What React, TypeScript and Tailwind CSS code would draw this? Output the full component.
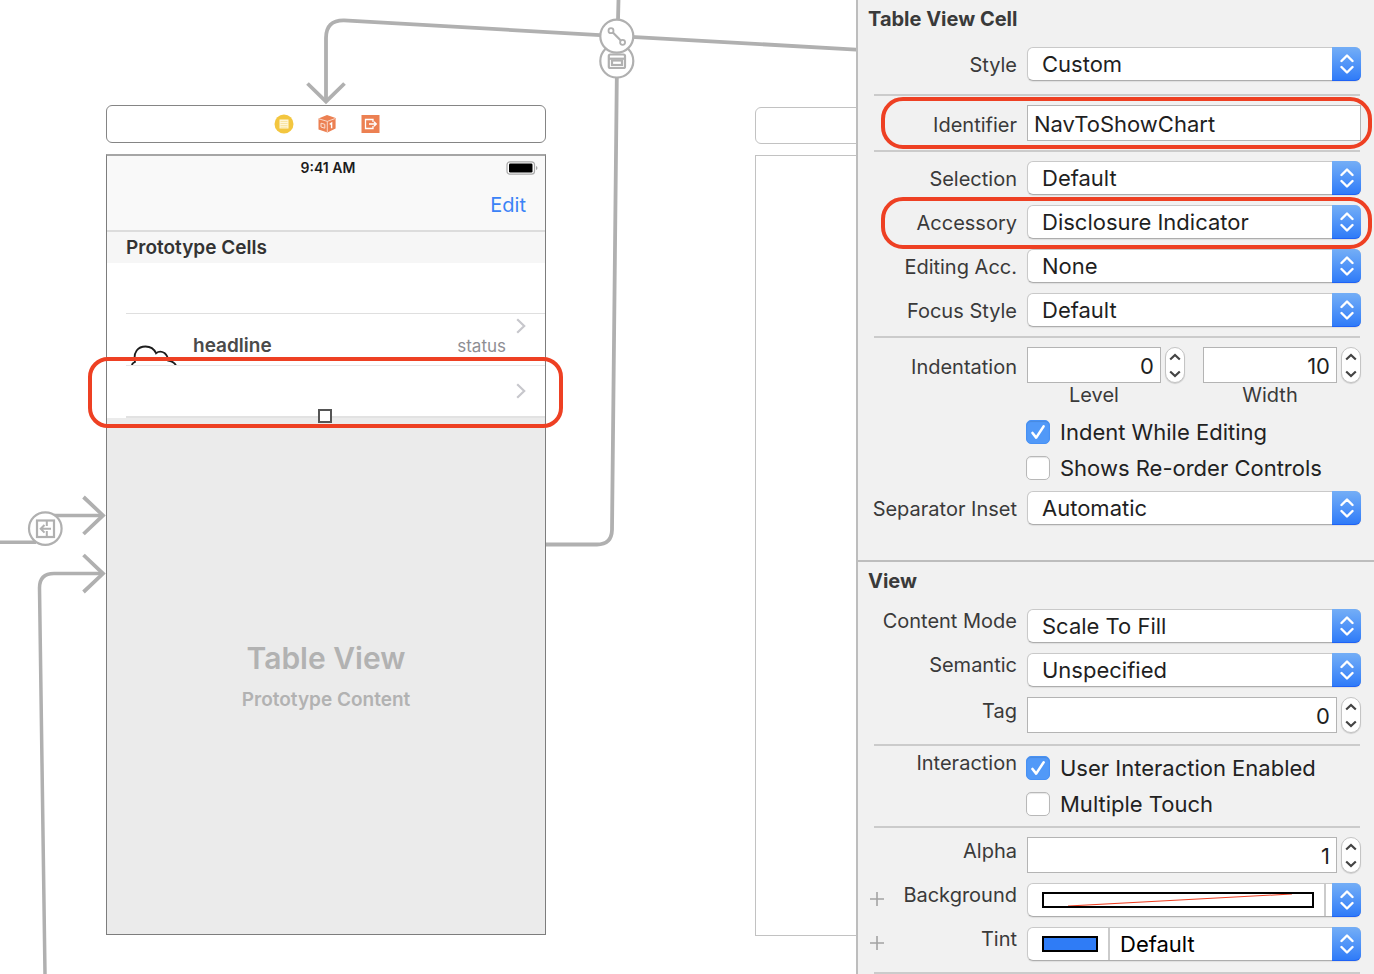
import React, { useId } from "react";

function Updown() {
  return (
    <span className="pointer-events-none absolute inset-y-0 right-0 grid w-[29px] place-items-center rounded-r-[6px] border-b border-[#1f62f5] bg-linear-to-b from-[#74aef6] to-[#2f7bf8]">
      <svg width="14" height="20" viewBox="0 0 14 20" fill="none" stroke="white" strokeWidth="2.4" strokeLinecap="round" strokeLinejoin="round" aria-hidden="true">
        <path d="M1.5 7 7 1.5 12.500 7M1.5 13 7 18.500 12.500 13" />
      </svg>
    </span>
  );
}

const popup =
  "relative flex h-[34px] w-full rounded-[6px] border border-[#c9c9c9] border-b-[#adadad] bg-white shadow-[0_1px_1px_rgba(0,0,0,0.08)]";

function Popup({ id, value }: { id: string; value: string }) {
  return (
    <div className={popup}>
      <select id={id} defaultValue={value} className="w-full appearance-none bg-transparent pr-8 pl-3.5 text-[22px] leading-8 text-[#1f1f1f] outline-none">
        <option>{value}</option>
      </select>
      <div className="absolute -inset-px left-auto w-[29px]">
        <Updown />
      </div>
    </div>
  );
}

const labelAlign = {
  center: "",
  field: "pt-1",
  raised: "pb-3",
  raisedField: "pb-2",
  top: "pb-5",
};

function Row({
  label,
  htmlFor,
  align = "center",
  plus,
  marked,
  children,
}: {
  label: string;
  htmlFor?: string;
  align?: keyof typeof labelAlign;
  plus?: boolean;
  marked?: boolean;
  children: React.ReactNode;
}) {
  return (
    <div className="relative flex items-start gap-2.5 pr-[13px]">
      <div className={`flex h-9 w-[159px] shrink-0 items-center pl-3 ${labelAlign[align]}`}>
        {plus && (
          <button type="button" aria-label={`Add ${label} variation`} className="pt-2 text-[#a3a3a3]">
            <svg width="14" height="14" viewBox="0 0 14 14" stroke="currentColor" strokeWidth="1.6" aria-hidden="true">
              <path d="M7 0V14M0 7H14" />
            </svg>
          </button>
        )}
        <label htmlFor={htmlFor} className="ml-auto text-[20px] leading-6 whitespace-nowrap text-[#3a3a3a]">
          {label}
        </label>
      </div>
      <div className="min-w-0 flex-1">{children}</div>
      {marked && <span className="pointer-events-none absolute -inset-y-2 right-0.5 left-[23px] rounded-[22px] border-4 border-[#ee4023]" />}
    </div>
  );
}

function PopupRow(props: { label: string; value: string; align?: keyof typeof labelAlign; marked?: boolean }) {
  const id = useId();
  return (
    <div className="h-[34px]">
      <Row label={props.label} htmlFor={id} align={props.align} marked={props.marked}>
        <Popup id={id} value={props.value} />
      </Row>
    </div>
  );
}

const field =
  "h-9 w-full min-w-0 border border-[#b4b4b4] bg-white px-1.5 pt-0.5 text-[22px] leading-8 text-[#1f1f1f] outline-none";

function Stepper({ name }: { name: string }) {
  return (
    <div className="flex h-9 w-5 shrink-0 flex-col overflow-hidden rounded-full border border-[#c4c4c4] bg-white shadow-[0_1px_1px_rgba(0,0,0,0.15)]">
      <button type="button" aria-label={`Increase ${name}`} className="grid flex-1 place-items-center">
        <svg width="12" height="8" viewBox="0 0 12 8" fill="none" stroke="#444" strokeWidth="2.2" aria-hidden="true">
          <path d="M1.200 6.500 6 2l4.800 4.500" />
        </svg>
      </button>
      <button type="button" aria-label={`Decrease ${name}`} className="grid flex-1 place-items-center">
        <svg width="12" height="8" viewBox="0 0 12 8" fill="none" stroke="#444" strokeWidth="2.2" aria-hidden="true">
          <path d="M1.200 1.500 6 6l4.800-4.500" />
        </svg>
      </button>
    </div>
  );
}

function NumberField({ id, name, value }: { id: string; name: string; value: string }) {
  return (
    <div className="flex gap-1">
      <input id={id} type="text" inputMode="numeric" aria-label={name} defaultValue={value} className={`${field} text-right`} />
      <Stepper name={name} />
    </div>
  );
}

function Check({ label, checked }: { label: string; checked?: boolean }) {
  return (
    <label className="-ml-px flex h-6 items-center gap-2.5 text-[22px] leading-6 whitespace-nowrap text-[#222]">
      <span className="grid size-6 shrink-0">
        <input
          type="checkbox"
          defaultChecked={checked}
          className="peer col-start-1 row-start-1 size-6 appearance-none rounded-[5px] border border-[#b8b8b8] bg-white shadow-[inset_0_1px_1px_rgba(0,0,0,0.1)] checked:border-[#4791f5] checked:bg-[#5199f8]"
        />
        <svg className="pointer-events-none invisible col-start-1 row-start-1 peer-checked:visible" width="24" height="24" viewBox="0 0 24 24" fill="none" stroke="white" strokeWidth="2.600" strokeLinecap="round" strokeLinejoin="round" aria-hidden="true">
          <path d="M6.500 13 10.200 17.600 17.600 6.400" />
        </svg>
      </span>
      {label}
    </label>
  );
}

function Rule() {
  return <hr className="my-[9px] mr-3.5 ml-4 border-t-2 border-[#cbcbcb]" />;
}

function Inspector() {
  return (
    <aside className="flex flex-col border-l-2 border-[#bdbdbd] bg-[#f1f1f1]">
      <section className="flex flex-col pb-[35px]">
        <h2 className="px-2.5 pt-[7px] pb-4 text-[20px] leading-6 font-bold text-[#3a3a3a]">Table View Cell</h2>
        <div className="pb-1">
          <PopupRow label="Style" value="Custom" />
        </div>
        <Rule />
        <Row label="Identifier" htmlFor="identifier" align="field" marked>
          <input id="identifier" type="text" defaultValue="NavToShowChart" className={`${field} block`} />
        </Row>
        <Rule />
        <div className="flex flex-col gap-2.5">
          <PopupRow label="Selection" value="Default" />
          <PopupRow label="Accessory" value="Disclosure Indicator" marked />
          <PopupRow label="Editing Acc." value="None" />
          <PopupRow label="Focus Style" value="Default" />
        </div>
        <Rule />
        <Row label="Indentation" htmlFor="level" align="field">
          <div className="grid grid-cols-2 gap-x-[18px] text-center text-[20px] leading-6 text-[#3a3a3a]">
            <NumberField id="level" name="Level" value="0" />
            <NumberField id="width" name="Width" value="10" />
            <label htmlFor="level" className="pr-6">Level</label>
            <label htmlFor="width" className="pr-6">Width</label>
          </div>
          <div className="flex flex-col gap-3 pt-[13px] pb-[11px]">
            <Check label="Indent While Editing" checked />
            <Check label="Shows Re-order Controls" />
          </div>
        </Row>
        <PopupRow label="Separator Inset" value="Automatic" />
      </section>

      <section className="flex flex-col border-t-2 border-[#bdbdbd]">
        <h2 className="px-2.5 pt-[7px] pb-4 text-[20px] leading-6 font-bold text-[#3a3a3a]">View</h2>
        <div className="flex flex-col gap-2.5">
          <PopupRow label="Content Mode" value="Scale To Fill" align="raised" />
          <PopupRow label="Semantic" value="Unspecified" align="raised" />
          <Row label="Tag" htmlFor="tag" align="raisedField">
            <NumberField id="tag" name="Tag" value="0" />
          </Row>
        </div>
        <div className="pt-0.5">
          <Rule />
        </div>
        <Row label="Interaction" align="top">
          <div className="flex flex-col gap-3 pt-px">
            <Check label="User Interaction Enabled" checked />
            <Check label="Multiple Touch" />
          </div>
        </Row>
        <div className="pt-px">
          <Rule />
        </div>
        <div className="flex flex-col gap-2.5">
          <Row label="Alpha" htmlFor="alpha" align="raisedField">
            <NumberField id="alpha" name="Alpha" value="1" />
          </Row>
          <div className="h-[34px]">
            <Row label="Background" htmlFor="background" align="raised" plus>
              <div className={popup}>
                <button type="button" aria-label="Background colour" className="flex flex-1 items-center border-r-2 border-[#cbcbcb] pr-2.5 pl-3.5">
                  <span className="block h-4 w-full border-2 border-black bg-white">
                    <svg className="block size-full" viewBox="0 0 268 12" preserveAspectRatio="none" aria-hidden="true">
                      <path d="M24 12 248 0" stroke="#ee4023" strokeWidth="1.100" />
                    </svg>
                  </span>
                </button>
                <select id="background" className="w-[34px] appearance-none bg-transparent outline-none" />
                <div className="absolute -inset-px left-auto w-[29px]">
                  <Updown />
                </div>
              </div>
            </Row>
          </div>
          <div className="h-[34px]">
            <Row label="Tint" htmlFor="tint" align="raised" plus>
              <div className={popup}>
                <button type="button" aria-label="Tint colour" className="flex w-[82px] shrink-0 items-center border-r-2 border-[#cbcbcb] pr-2.5 pl-3.5">
                  <span className="block h-4 w-full border-2 border-black bg-[#2f7cf6]" />
                </button>
                <select id="tint" className="min-w-0 flex-1 appearance-none bg-transparent pr-8 pl-2.5 text-[22px] leading-8 text-black outline-none">
                  <option>Default</option>
                </select>
                <div className="absolute -inset-px left-auto w-[29px]">
                  <Updown />
                </div>
              </div>
            </Row>
          </div>
        </div>
        <div className="pt-0.5">
          <hr className="mt-[9px] mr-3.5 ml-4 border-t-2 border-[#cbcbcb]" />
        </div>
      </section>
    </aside>
  );
}

function Segues() {
  return (
    <svg className="absolute top-0 left-0" width="1400" height="974" viewBox="0 0 1400 974" fill="none" stroke="#b0b0b0" strokeWidth="3.800" aria-hidden="true">
      <path d="M326 101V38Q326 20 344 20.300L600 35.200L900 52" />
      <path d="M307.500 83.500 326 101.500 344.500 83.500" />
      <path d="M618.500 0 617 60 612 530Q611.500 544.500 597 544.500H546" />
      <path d="M0 542.200H36" strokeWidth="3.500" />
      <path d="M54 515.400H103" strokeWidth="3.500" />
      <path d="M83.500 497 103 515.400 83.500 534" />
      <path d="M45 974 39.500 588Q39.500 573.600 54 573.600H103" strokeWidth="3.500" />
      <path d="M83.500 555 103 573.600 83.500 592" />

      <g strokeWidth="2.200">
        <circle cx="616.800" cy="61" r="16.500" fill="white" />
        <rect x="608.800" y="54.500" width="16.200" height="13.500" rx="1.500" />
        <path d="M609 58.700H625" />
        <rect x="612" y="60.500" width="10" height="4.500" />
        <circle cx="616.800" cy="36.200" r="16.500" fill="white" />
        <path d="M612.600 32.300 621 40.700" />
        <circle cx="611" cy="30.700" r="2.500" strokeWidth="1.800" />
        <circle cx="622.600" cy="42.300" r="2.500" strokeWidth="1.800" />
        <circle cx="45.300" cy="528.600" r="16.300" fill="white" />
        <rect x="37" y="520.500" width="17" height="16.500" />
        <path d="M46.800 520V526M46.800 531V537M51 528.800H41M44.500 525 40.700 528.800 44.500 532.600" strokeWidth="2" />
      </g>
    </svg>
  );
}

function Chevron() {
  return (
    <svg width="10" height="16" viewBox="0 0 10 16" fill="none" stroke="#c7c7cc" strokeWidth="2.200" aria-hidden="true">
      <path d="M1.200 1.200 8.200 8 1.200 14.800" />
    </svg>
  );
}

function SceneDock() {
  return (
    <div className="flex h-[38px] items-center justify-center gap-[23px] rounded-[6px] border border-[#858585] bg-white pl-0.5">
      <svg width="20" height="20" viewBox="0 0 20 20" aria-hidden="true">
        <circle cx="10" cy="10" r="9.500" fill="#f3c63f" />
        <rect x="5.500" y="5.500" width="9" height="9" fill="#fff6d8" />
        <path d="M6.500 7.500H13.500M6.500 9.500H13.500M6.500 11.500H13.500M6.500 13.200H13.500" stroke="#f5dc8c" strokeWidth="0.700" />
      </svg>
      <svg width="20" height="20" viewBox="0 0 20 20" aria-hidden="true">
        <path d="M10 1 18.600 4V14.500L10.500 18.500 1.500 15.500V4.500Z" fill="#ec8052" />
        <path d="M1.800 4.800 10.300 7.400 18 4.600M10.300 7.400V18" stroke="#fbe0d3" strokeWidth="0.900" fill="none" />
        <path d="M4 9.200 7.800 10.300V14.200L4 13Z" stroke="#fbe0d3" strokeWidth="1" fill="none" />
        <path d="M12.700 10.300 14.600 9V14.200" stroke="#fff" strokeWidth="1.400" fill="none" />
      </svg>
      <svg width="20" height="20" viewBox="0 0 20 20" aria-hidden="true">
        <rect x="1.500" y="1" width="18" height="18" fill="#ec8052" />
        <path d="M13 8V5.500H5.500V14.500H13V12M9 10H16M14 7.800 16.300 10 14 12.200" stroke="#fff" strokeWidth="1.300" fill="none" />
      </svg>
    </div>
  );
}

function TableScene() {
  return (
    <div className="absolute top-[105px] left-[106px] flex w-[440px] flex-col gap-[11px]">
      <SceneDock />
      <div className="flex h-[781px] flex-col border border-t-2 border-[#7d7d7d] border-t-[#a6a6a6] bg-[#ebebeb]">
        <header className="flex h-[76px] flex-col gap-[15px] border-b-2 border-[#dcdcdc] bg-[#f9f9f9]">
          <div className="grid grid-cols-3 items-center pt-0.5">
            <time className="col-start-2 pl-1 text-center text-[14px] leading-5 font-semibold text-[#1c1c1c]">9:41 AM</time>
            <svg className="mr-[7px] justify-self-end" width="32" height="14" viewBox="0 0 32 14" aria-hidden="true">
              <rect x="1" y="0.800" width="27.500" height="12.400" rx="3" fill="white" stroke="#a8a8a8" strokeWidth="1.200" />
              <rect x="3" y="2.600" width="23.500" height="8.800" rx="1.200" />
              <path d="M30 5V9Q31.500 8.500 31.500 7T30 5" fill="#a8a8a8" />
            </svg>
          </div>
          <button type="button" className="self-end px-[19px] text-[20px] leading-6 text-[#3b83f7]">Edit</button>
        </header>
        <h3 className="h-[31px] bg-[#f6f6f6] pl-[19px] text-[19px] leading-8 font-semibold text-[#333]">Prototype Cells</h3>
        <ul className="relative bg-white">
          <li className="ml-[19px] h-[51px] border-b border-[#dfdfdf]" />
          <li className="ml-[19px] flex h-[52px] border-b border-[#e6e6e6]">
            <svg className="mt-[31px] ml-[5px]" width="47" height="20" viewBox="0 0 47 20" fill="none" stroke="#1d1d1d" strokeWidth="1.800" aria-hidden="true">
              <path d="M1 20.500Q1 18 4 17C2 7 7 1.500 14.500 1.500Q22 1.500 25 8.200Q29 5 33.500 8Q37 11 37 15.500Q43 16.500 45 20.500" />
            </svg>
            <span className="pt-5 pl-[15px] text-[19px] leading-6 font-semibold text-[#4a4a4a]">headline</span>
            <span className="ml-auto pt-5 pr-2.5 text-[17px] leading-6 text-[#8e8e93]">status</span>
            <span className="pt-1 pr-[19px]">
              <Chevron />
            </span>
          </li>
          <li className="ml-[19px] flex h-[52px] items-center justify-end border-b-2 border-[#e2e2e2] pr-[19px]">
            <Chevron />
          </li>
          <li aria-hidden="true" className="absolute -bottom-[5px] left-[211px] size-3.5 border-2 border-[#555] bg-white" />
        </ul>
        <div className="flex flex-1 flex-col items-center gap-2 pt-[220px] text-[#b2b2b2]">
          <p className="text-[30px] leading-10 font-semibold">Table View</p>
          <p className="text-[19px] leading-7 font-semibold">Prototype Content</p>
        </div>
      </div>
    </div>
  );
}

function Canvas() {
  return (
    <main className="relative overflow-hidden bg-white">
      <Segues />
      <TableScene />
      <div className="absolute top-[107px] left-[755px] flex w-[440px] flex-col gap-[11px]">
        <div className="h-[37px] rounded-[6px] border border-[#c2c2c2] bg-white" />
        <div className="h-[781px] border border-[#c2c2c2] bg-white" />
      </div>
      <div className="absolute top-[357px] left-[88px] h-[71px] w-[475px] rounded-[20px] border-4 border-[#ee4023]" />
    </main>
  );
}

export default function App() {
  return (
    <div className="grid min-h-screen grid-cols-[minmax(0,1fr)_518px] font-['Inter','Liberation_Sans',sans-serif]">
      <Canvas />
      <Inspector />
    </div>
  );
}
